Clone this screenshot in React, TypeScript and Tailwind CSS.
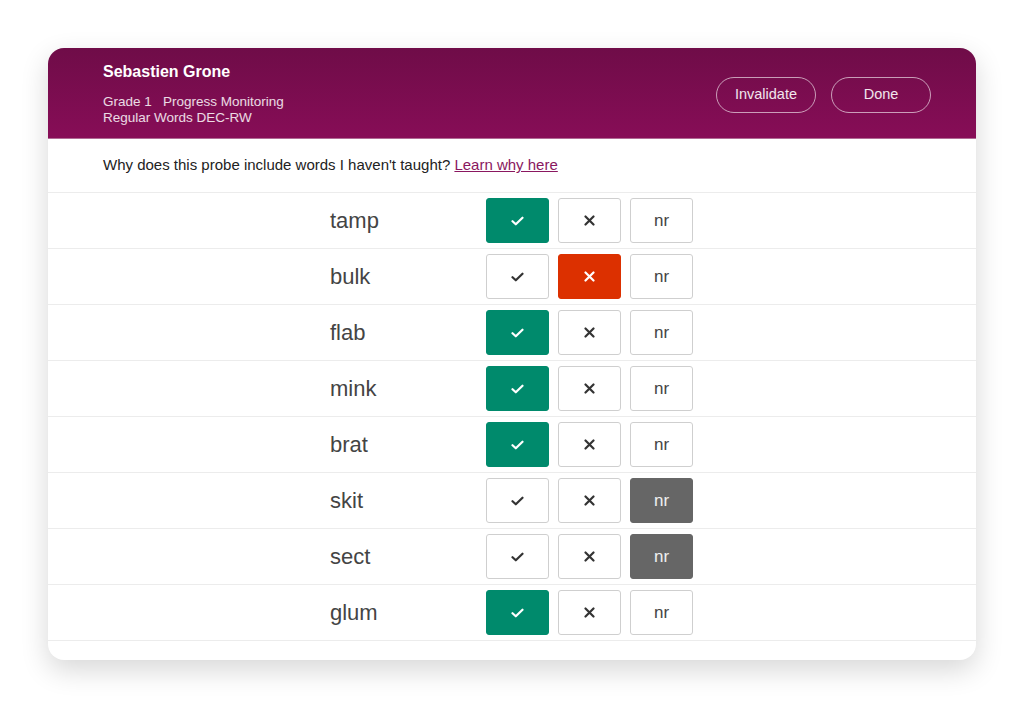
import React, { useState } from 'react';

type Mark = 'correct' | 'wrong' | 'nr' | null;

const initialWords: { word: string; mark: Mark }[] = [
  { word: 'tamp', mark: 'correct' },
  { word: 'bulk', mark: 'wrong' },
  { word: 'flab', mark: 'correct' },
  { word: 'mink', mark: 'correct' },
  { word: 'brat', mark: 'correct' },
  { word: 'skit', mark: 'nr' },
  { word: 'sect', mark: 'nr' },
  { word: 'glum', mark: 'correct' },
];

const CheckIcon = ({ color }: { color: string }) => (
  <svg width="13" height="10" viewBox="0 0 13 10" fill="none">
    <path d="M1.5 5.2L4.8 8.3L11.5 1.7" stroke={color} strokeWidth="2.2" strokeLinecap="round" strokeLinejoin="round" />
  </svg>
);

const CrossIcon = ({ color }: { color: string }) => (
  <svg width="11" height="11" viewBox="0 0 11 11" fill="none">
    <path d="M1.5 1.5L9.5 9.5M9.5 1.5L1.5 9.5" stroke={color} strokeWidth="2.2" strokeLinecap="round" />
  </svg>
);

const App = () => {
  const [words, setWords] = useState(initialWords);

  const setMark = (index: number, mark: Mark) => {
    setWords(prev => prev.map((w, i) => (i === index ? { ...w, mark: w.mark === mark ? null : mark } : w)));
  };

  return (
    <div className="min-h-screen bg-white pt-[48px] pl-[48px]" style={{ fontFamily: '"Liberation Sans", Arial, sans-serif' }}>
      <div className="w-[928px] rounded-[16px] bg-white overflow-hidden shadow-[0_10px_28px_rgba(0,0,0,0.16)]">
        {/* Header */}
        <div className="h-[91px] bg-gradient-to-b from-[#6f0c48] to-[#870d57] flex items-start justify-between pl-[55px] pr-[45px] border-b border-[#b06a94]">
          <div className="pt-[14px]">
            <h1 className="text-[16px] font-bold text-white leading-[20px]">Sebastien Grone</h1>
            <div className="mt-[12px] text-[13.5px] leading-[16px] text-white/85">
              <p>Grade 1&nbsp;&nbsp; Progress Monitoring</p>
              <p>Regular Words DEC-RW</p>
            </div>
          </div>
          <div className="flex gap-[15px] pt-[29px]">
            <button className="w-[100px] h-[36px] rounded-full border border-white/60 text-white/90 text-[14.5px]">Invalidate</button>
            <button className="w-[100px] h-[36px] rounded-full border border-white/60 text-white/90 text-[14.5px]">Done</button>
          </div>
        </div>

        {/* Info */}
        <div className="h-[54px] flex items-center pl-[55px] border-b border-[#ececec] text-[15px] text-[#222]">
          Why does this probe include words I haven&apos;t taught?&nbsp;
          <a href="#" className="text-[#8a1760] underline">Learn why here</a>
        </div>

        {/* Words */}
        <div className="pb-[19px]">
          {words.map((w, i) => (
            <div key={w.word} className="h-[56px] flex items-center pl-[282px] border-b border-[#ececec]">
              <span className="w-[156px] text-[22px] text-[#444]">{w.word}</span>
              <div className="flex gap-[9px]">
                <button
                  onClick={() => setMark(i, 'correct')}
                  className={`w-[63px] h-[45px] rounded-[3px] flex items-center justify-center border ${
                    w.mark === 'correct' ? 'bg-[#008a6c] border-[#008a6c]' : 'bg-white border-[#cfcfcf]'
                  }`}
                >
                  <CheckIcon color={w.mark === 'correct' ? '#ffffff' : '#333333'} />
                </button>
                <button
                  onClick={() => setMark(i, 'wrong')}
                  className={`w-[63px] h-[45px] rounded-[3px] flex items-center justify-center border ${
                    w.mark === 'wrong' ? 'bg-[#dc3000] border-[#dc3000]' : 'bg-white border-[#cfcfcf]'
                  }`}
                >
                  <CrossIcon color={w.mark === 'wrong' ? '#ffffff' : '#333333'} />
                </button>
                <button
                  onClick={() => setMark(i, 'nr')}
                  className={`w-[63px] h-[45px] rounded-[3px] flex items-center justify-center border text-[17px] ${
                    w.mark === 'nr' ? 'bg-[#666666] border-[#666666] text-white/90' : 'bg-white border-[#cfcfcf] text-[#444]'
                  }`}
                >
                  nr
                </button>
              </div>
            </div>
          ))}
        </div>
      </div>
    </div>
  );
};

export default App;
